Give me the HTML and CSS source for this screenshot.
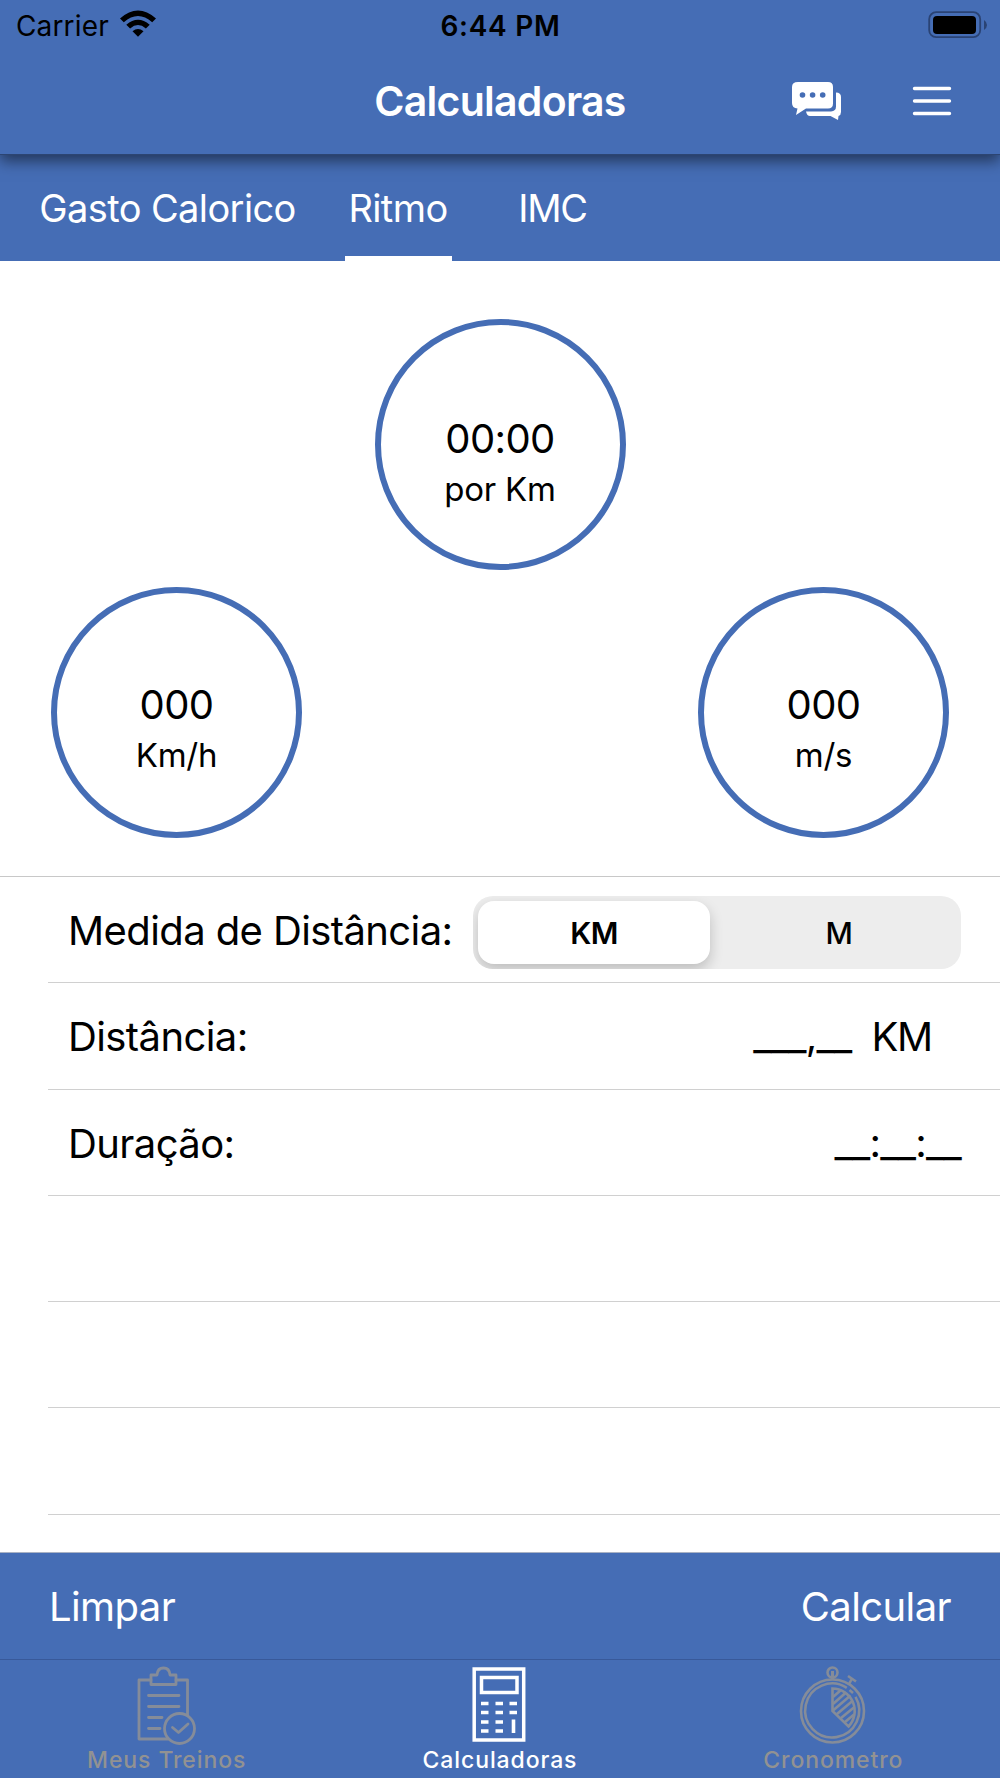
FILE: index.html
```
<!DOCTYPE html>
<html lang="pt-BR">
<head>
    <meta charset="UTF-8">
    <meta name="viewport" content="width=device-width, initial-scale=1.0">
    <title>Calculadoras</title>
    <link rel="stylesheet" href="styles.css">
</head>
<body>

    <header class="header">
        <div class="status-bar">
            <div class="carrier">
                <span>Carrier</span>
                <svg width="38" height="28" viewBox="0 0 38 28">
                    <path d="M1 8.5 Q19 -7.5 37 8.5 L33.2 12.2 Q19 -.3 4.8 12.2 Z"/>
                    <path d="M7.3 14.8 Q19 4.6 30.7 14.8 L26.9 18.4 Q19 11.8 11.1 18.4 Z"/>
                    <path d="M13.5 21.2 Q19 16.6 24.5 21.2 L19 26.8 Z"/>
                </svg>
            </div>
            <span class="time">6:44 PM</span>
            <svg class="battery" width="60" height="28" viewBox="0 0 60 28">
                <rect x="1.2" y="1.2" width="51" height="25" rx="7" fill="none" stroke="#2a4374" stroke-width="1.8"/>
                <rect x="5" y="5" width="43" height="18" rx="4"/>
                <path d="M56 9 Q59 11 59 14 Q59 17 56 19 Z" fill="#2a4374"/>
            </svg>
        </div>
        <div class="nav-bar">
            <h1>Calculadoras</h1>
            <div class="nav-icons">
                <svg width="50" height="40" viewBox="0 0 50 40" fill="#fff">
                    <path d="M6 1 H36 Q41 1 41 6 V22.500 Q41 27.500 36 27.500 H14 L4 34 L5.500 27.500 Q0 27 0 22 V6 Q0 1 6 1 Z"/>
                    <path d="M44 11.500 Q49 11.500 49 16 V31 Q49 34 46.500 35 L46 39 L38.500 35 H18 Q15 35 14 30.500 H39 Q44 30 44 25.500 Z"/>
                    <g fill="#456db5">
                        <circle cx="10.500" cy="14" r="2.800"/>
                        <circle cx="20.600" cy="14" r="2.800"/>
                        <circle cx="30.700" cy="14" r="2.800"/>
                    </g>
                </svg>
                <svg width="40" height="32" viewBox="0 0 40 32" stroke="#fff" stroke-width="3.400" stroke-linecap="round">
                    <path d="M2.500 3.500 H37.500 M2.500 16 H37.500 M2.500 28.500 H37.500"/>
                </svg>
            </div>
        </div>
    </header>

    <nav class="tabs">
        <a class="tab tab-gasto">Gasto Calorico</a>
        <a class="tab tab-ritmo active">Ritmo</a>
        <a class="tab tab-imc">IMC</a>
    </nav>

    <main>
        <section class="results">
            <div class="circle circle-top">
                <span class="value">00:00</span>
                <span class="unit">por Km</span>
            </div>
            <div class="circle-row">
                <div class="circle">
                    <span class="value">000</span>
                    <span class="unit">Km/h</span>
                </div>
                <div class="circle">
                    <span class="value">000</span>
                    <span class="unit">m/s</span>
                </div>
            </div>
        </section>

        <section class="list">
            <div class="row">
                <span class="label">Medida de Distância:</span>
                <div class="segmented">
                    <span class="segment selected">KM</span>
                    <span class="segment">M</span>
                </div>
            </div>
            <div class="row">
                <span class="label">Distância:</span>
                <div class="field">
                    <span class="mask">___,__</span>
                    <span class="field-unit">KM</span>
                </div>
            </div>
            <div class="row">
                <span class="label">Duração:</span>
                <span class="mask">__:__:__</span>
            </div>
            <div class="row"></div>
            <div class="row"></div>
            <div class="row"></div>
        </section>
    </main>

    <div class="toolbar">
        <span>Limpar</span>
        <span>Calcular</span>
    </div>

    <footer class="tab-bar">
        <div class="item">
            <svg width="60" height="80" viewBox="0 0 60 80" fill="none" stroke="#858c99" stroke-width="2.800" stroke-linejoin="round" stroke-linecap="round">
                <path d="M14 15 H2 V74 H31 M39 15 H50.500 V50"/>
                <path d="M14 19.500 V10 H20 Q20.500 3 26.500 3 Q32.500 3 33 10 H39 V19.500 Z"/>
                <path d="M11.500 30.500 H42 M11.500 41.500 H42 M11.500 52.500 H25 M11.500 63.500 H23"/>
                <circle cx="42.500" cy="63.500" r="15"/>
                <path d="M35.500 62.500 L41.500 67.500 L51 59"/>
            </svg>
            <span>Meus Treinos</span>
        </div>
        <div class="item active">
            <svg width="55" height="80" viewBox="0 0 55 80" fill="none" stroke="#fff">
                <rect x="2.200" y="4" width="49.500" height="71" stroke-width="3.500"/>
                <rect x="9.500" y="12.500" width="35.500" height="15" stroke-width="3.500"/>
                <path stroke-width="3.600" d="M9 38.500 h7.500 M23.500 38.500 h7.500 M37.500 38.500 h7.500 M9 47.500 h7.500 M23.500 47.500 h7.500 M37.500 47.500 h7.500 M9 57 h7.500 M23.500 57 h7.500 M9 66 h7.500 M23.500 66 h7.500 M41.500 54.500 v13.500"/>
            </svg>
            <span>Calculadoras</span>
        </div>
        <div class="item">
            <svg width="68" height="80" viewBox="0 0 68 80" fill="none" stroke="#858c99" stroke-width="2.600">
                <circle cx="33.500" cy="46" r="31.500"/>
                <path d="M47.800 22.800 A27 27 0 1 0 56.500 31.900"/>
                <path d="M50.500 25 L54 28" stroke-width="2.500"/>
                <circle cx="33.500" cy="7.500" r="5"/>
                <path d="M33.500 6 V14" stroke-width="3"/>
                <path d="M49 11 L57 16.500 M53 13.500 L49.500 20"/>
                <path d="M33.500 46 V23.500 A22.500 22.500 0 0 1 49.500 61.500 Z"/>
                <path d="M34 32 L42 25 M34 39 L47 27.500 M34 45.500 L51.500 30.500 M38 49 L54 35.500 M42 53 L55.500 42 M46 57 L55 49.500"/>
            </svg>
            <span>Cronometro</span>
        </div>
    </footer>

</body>
</html>
```
FILE: styles.css
```
* {
    box-sizing: border-box;
}

body {
    margin: 0;
    width: 1000px;
    height: 1778px;
    overflow: hidden;
    display: flex;
    flex-direction: column;
    background-color: #fff;
    color: #000;
    font-family: Inter, "Liberation Sans", sans-serif;
    font-size: 40px;
    letter-spacing: -0.6px;
    white-space: nowrap;
}

svg {
    display: block;
    flex: none;
}

/* Header */
.header {
    height: 155px;
    flex: none;
    background-color: #456db5;
    border-bottom: 1px solid #2c4573;
    box-shadow: 0 6px 14px rgba(0, 0, 0, 0.5);
    z-index: 1;
}

.status-bar {
    height: 50px;
    padding: 0 12px 0 16px;
    display: grid;
    grid-template-columns: 1fr auto 1fr;
    align-items: center;
    font-size: 28px;
    letter-spacing: 0.15px;
}

.carrier {
    display: flex;
    align-items: center;
    gap: 10px;
}

.carrier span,
.time {
    padding-top: 1px;
}

.carrier svg {
    margin-bottom: 2px;
}

.time {
    padding-right: 3px;
    font-weight: 600;
    letter-spacing: 0.7px;
}

.battery {
    justify-self: end;
    margin-bottom: 1px;
}

.nav-bar {
    height: 102px;
    padding: 0 48px;
    display: grid;
    grid-template-columns: 1fr auto 1fr;
    align-items: center;
    color: #fff;
}

.nav-bar h1 {
    grid-column: 2;
    margin: 0;
    font-size: 41px;
    font-weight: 600;
    letter-spacing: -0.75px;
}

.nav-icons {
    display: flex;
    align-items: center;
    justify-content: flex-end;
    gap: 70px;
}

/* Tabs */
.tabs {
    height: 106px;
    flex: none;
    display: flex;
    padding-left: 35px;
    background-color: #456db5;
    color: #fff;
    font-size: 38px;
}

.tab {
    display: flex;
    align-items: center;
    justify-content: center;
    border-bottom: 5px solid transparent;
    padding: 5px 1px 0 0;
}

.tab-gasto {
    width: 266px;
}

.tab-ritmo {
    width: 107px;
    margin: 0 44px;
}

.tab-imc {
    width: 114px;
    letter-spacing: -1.2px;
}

.tab.active {
    border-bottom-color: #fff;
}

/* Results */
.results {
    height: 615px;
    padding: 58px 51px 0;
}

.circle {
    width: 251px;
    height: 251px;
    border: 6px solid #456db5;
    border-radius: 50%;
    padding-top: 86px;
    display: flex;
    flex-direction: column;
    align-items: center;
}

.circle-top {
    margin: 0 auto 17px;
    padding-top: 88px;
}

.circle-row {
    display: flex;
    justify-content: space-between;
}

.value {
    line-height: 52px;
}

.unit {
    font-size: 33px;
    letter-spacing: -0.2px;
    line-height: 49px;
}

/* Form list */
.list {
    border-top: 1px solid #c8c8c8;
}

.row {
    height: 106.3px;
    margin-left: 48px;
    padding: 0 39px 0 20px;
    display: flex;
    align-items: center;
    justify-content: space-between;
    border-bottom: 1px solid #d0d0d0;
}

.label {
    padding-top: 2px;
}

.segmented {
    width: 488px;
    height: 73px;
    margin-top: 6px;
    padding: 5px;
    display: flex;
    border-radius: 20px;
    background-color: #ededed;
    font-size: 30px;
    overflow: hidden;
}

.segment {
    flex: 1;
    display: flex;
    align-items: center;
    justify-content: center;
    padding-left: 12px;
    font-weight: 450;
}

.selected {
    flex: none;
    width: 232px;
    height: 63px;
    padding-left: 0;
    background-color: #fff;
    border-radius: 16px;
    font-weight: 600;
    box-shadow: 0 6px 14px rgba(0, 0, 0, 0.2);
}

.field {
    display: flex;
    gap: 20px;
    padding-right: 29px;
}

.field-unit {
    padding-top: 2px;
    letter-spacing: -1.2px;
}

.mask {
    padding-top: 1px;
    letter-spacing: -0.75px;
}

/* Bottom bars */
.toolbar {
    height: 107px;
    margin-top: auto;
    flex: none;
    padding: 0 49px;
    display: flex;
    align-items: center;
    justify-content: space-between;
    background-color: #456db5;
    border-top: 1px solid #a9b2c4;
    color: #fff;
}

.tab-bar {
    height: 119px;
    flex: none;
    display: grid;
    grid-template-columns: repeat(3, 1fr);
    background-color: #456db5;
    border-top: 1px solid #38599a;
    color: #929292;
    font-size: 23px;
    font-weight: 500;
    letter-spacing: 0.9px;
}

.item {
    display: flex;
    flex-direction: column;
    align-items: center;
    padding-top: 5px;
    line-height: 31px;
}

.item.active {
    color: #fff;
}
```
